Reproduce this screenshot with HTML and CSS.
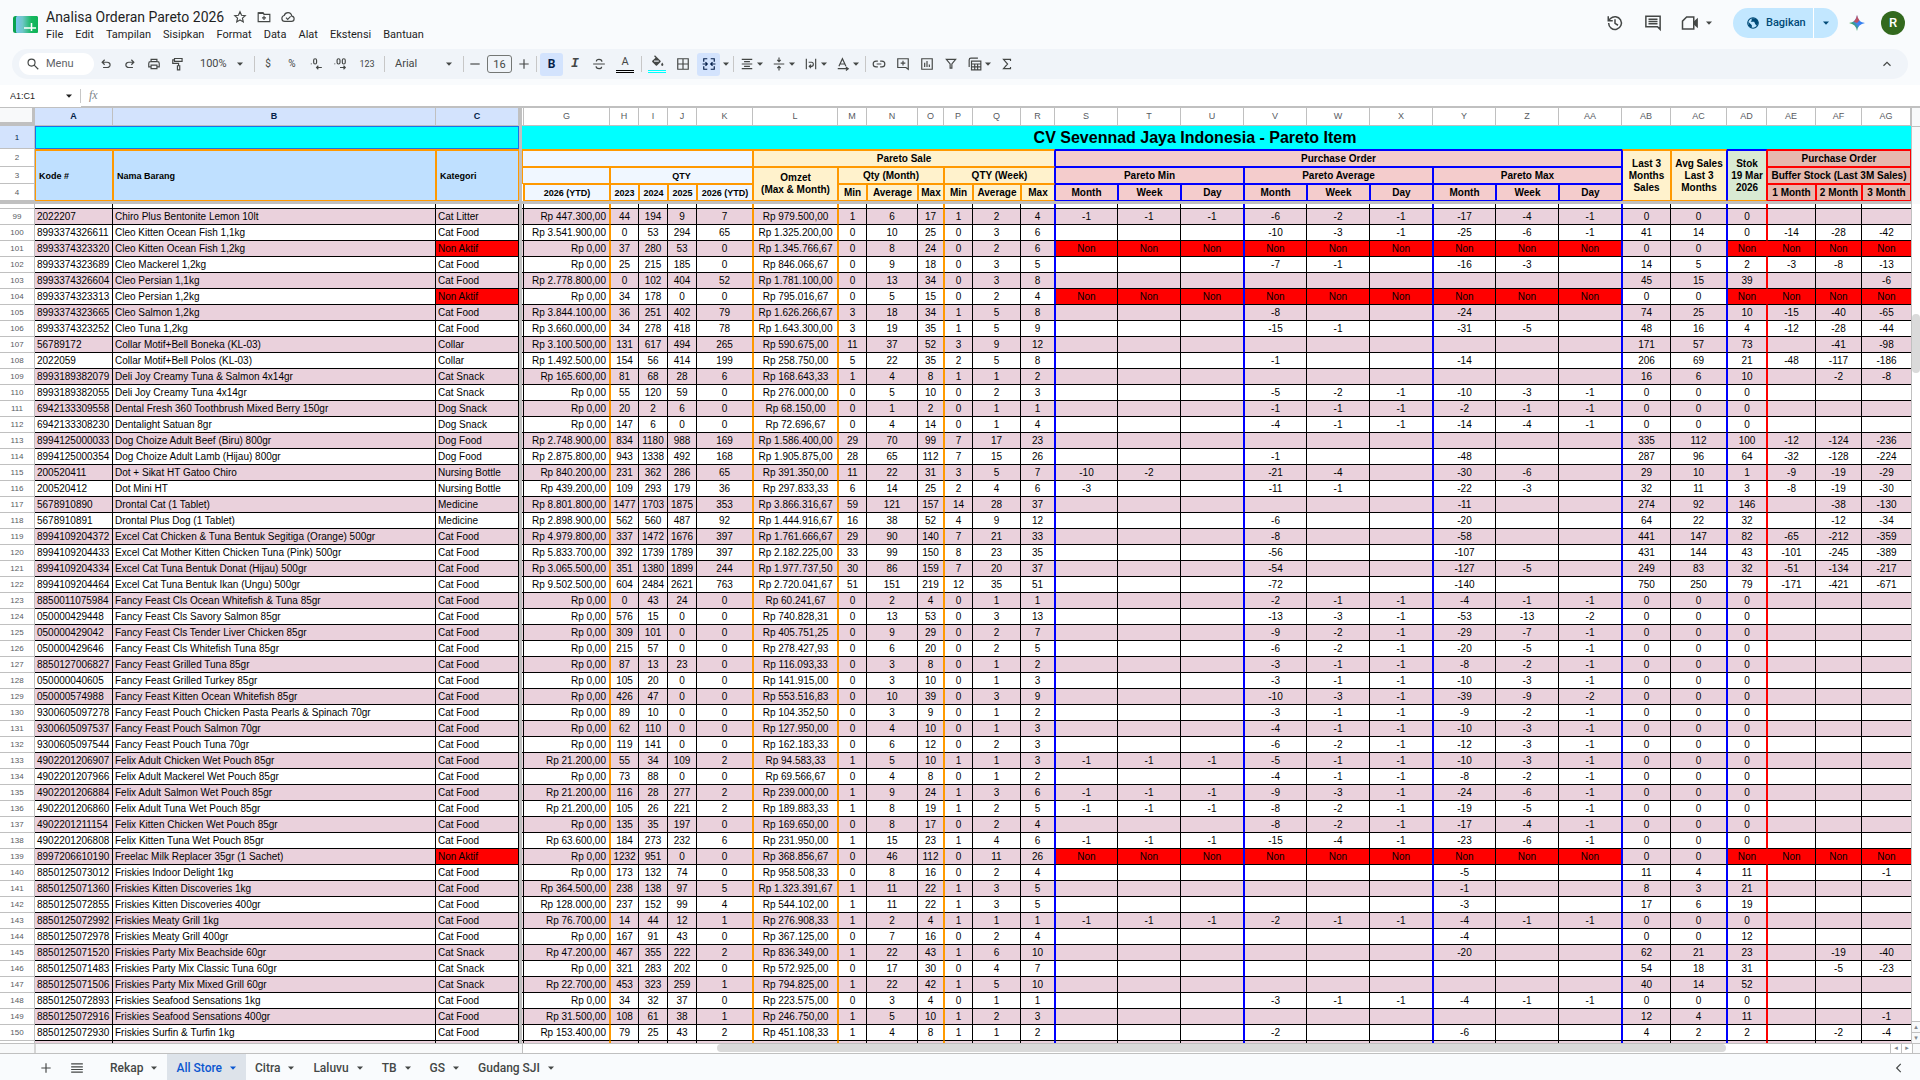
FILE: index.html
```html
<!DOCTYPE html>
<html lang="id">
<head>
<meta charset="utf-8">
<title>Analisa Orderan Pareto 2026</title>
<link rel="stylesheet" href="styles.css">
</head>
<body>
<svg class="sprite" aria-hidden="true">
  <symbol id="caret" viewBox="0 0 8 8"><path d="M1 2.500h6L4 5.800z" fill="currentColor"/></symbol>
  <symbol id="search" viewBox="0 0 24 24"><circle cx="9.5" cy="9.5" r="6"/><path d="M14 14l7 7"/></symbol>
  <symbol id="undo" viewBox="0 -960 960 960"><path class="solid" d="M280-200v-80h284q63 0 109.500-40T720-420q0-60-46.500-100T564-560H312l104 104-56 56-200-200 200-200 56 56-104 104h252q97 0 169.500 63T800-420q0 94-72.500 157T564-200H280Z"/></symbol>
  <symbol id="redo" viewBox="0 -960 960 960"><path class="solid" d="M396-200q-97 0-169.500-63T154-420q0-94 72.500-157T396-640h252L544-744l56-56 200 200-200 200-56-56 104-104H396q-63 0-109.500 40T240-420q0 60 46.500 100T396-280h284v80H396Z"/></symbol>
  <symbol id="print" viewBox="0 0 24 24"><path d="M7 8V4h10v4M7 17H3v-6q0-3 3-3h12q3 0 3 3v6h-4M7 14h10v6H7z"/></symbol>
  <symbol id="paint" viewBox="0 0 24 24"><path d="M6 2.500h13v5H6zM6 5H3v6h10v4M11 15h4v7h-4z"/></symbol>
  <symbol id="decless" viewBox="0 0 24 24"><path d="M22 18h-9m3-3l-3 3 3 3"/><path d="M4 11v1.500"/><rect x="8" y="3" width="5" height="9" rx="2.500"/></symbol>
  <symbol id="decmore" viewBox="0 0 24 24"><path d="M12 18h9m-3-3l3 3-3 3"/><path d="M3 11v1.500"/><rect x="7" y="3" width="5" height="9" rx="2.500"/><rect x="16" y="3" width="5" height="9" rx="2.500"/></symbol>
  <symbol id="minus" viewBox="0 0 24 24"><path d="M4 12h16"/></symbol>
  <symbol id="plus" viewBox="0 0 24 24"><path d="M4 12h16M12 4v16"/></symbol>
  <symbol id="strike" viewBox="0 0 24 24"><path d="M2 12h20M17 8q0-4-5-4-4.500 0-4.500 3.500M7 16q0 4 5 4 4.500 0 4.500-3.500"/></symbol>
  <symbol id="fill" viewBox="0 0 24 24"><path class="solid" d="M7 2l1.500-1.500L18 10q1 1 0 2l-6 6q-1 1-2 0l-6-6q-1-1 0-2l5.500-5.500zM21 13q3 3.500 1.500 5t-3 0 1.500-5z"/><path d="M7 10.500h8" stroke="#f0f4f9"/></symbol>
  <symbol id="borders" viewBox="0 0 24 24"><path d="M3 3h18v18H3zM12 3v18M3 12h18"/></symbol>
  <symbol id="merge" viewBox="0 0 24 24"><path d="M9 3H3v5M15 3h6v5M9 21H3v-5M15 21h6v-5M1 12h8m-3-3l3 3-3 3M23 12h-8m3-3l-3 3 3 3"/></symbol>
  <symbol id="halign" viewBox="0 0 24 24"><path d="M3 4h18M7 8h10M3 12h18M7 16h10M3 20h18"/></symbol>
  <symbol id="valign" viewBox="0 0 24 24"><path d="M3 12h18M12 1v7m-3-3l3 3 3-3M12 23v-7m-3 3l3-3 3 3"/></symbol>
  <symbol id="wrap" viewBox="0 0 24 24"><path d="M4 3v18M20 3v18M8 9h5q3 0 3 3.500T13 16h-4m3-3l-3 3 3 3"/></symbol>
  <symbol id="rotate" viewBox="0 0 24 24"><path d="M5 16L11 3l6 13M7 12h8M3 20h17m-3-3l4 3-4 3"/></symbol>
  <symbol id="link" viewBox="0 0 24 24"><path d="M10 7H7a5 5 0 0 0 0 10h3M14 7h3a5 5 0 0 1 0 10h-3M8 12h8"/></symbol>
  <symbol id="addnote" viewBox="0 0 24 24"><path d="M3 3h18v18l-4-3H3zM12 6.500v8M8 10.500h8"/></symbol>
  <symbol id="chart" viewBox="0 0 24 24"><path d="M3 3h18v18H3zM8 10v7M12 7v10M16 13v4"/></symbol>
  <symbol id="filter" viewBox="0 0 24 24"><path d="M4 4h16l-6.500 8v7h-3v-7z"/></symbol>
  <symbol id="views" viewBox="0 0 24 24"><path d="M2 17V5q0-3 3-3h12M6 7h16v15H6zM6 12h16M6 17h16M11.500 12v10M16.500 12v10"/></symbol>
  <symbol id="sigma" viewBox="0 0 24 24"><path d="M18 7V4H6l7 8-7 8h12v-3"/></symbol>
  <symbol id="up" viewBox="0 0 24 24"><path d="M6 15l6-6 6 6"/></symbol>
  <symbol id="left" viewBox="0 0 24 24"><path d="M15 5l-7 7 7 7"/></symbol>
  <symbol id="star" viewBox="0 0 24 24"><path d="M12 3l2.700 6 6.300.6-4.800 4.300 1.400 6.500L12 17l-5.600 3.400 1.400-6.500L3 9.600 9.300 9z"/></symbol>
  <symbol id="move" viewBox="0 0 24 24"><path d="M2 5h8l2 2.500h10V20H2zM12 10v7M8.500 13.500h7"/><path d="M2 4h9l2 3H2z" fill="currentColor" stroke="none"/></symbol>
  <symbol id="cloud" viewBox="0 0 24 24"><path d="M6.500 19.500q-5 0-5-5 0-4 4-5Q7 4.500 12 4.500q5.500 0 6.500 6 4 .5 4 4.500 0 4.500-4.500 4.500zM8.500 13l3 3 5-5"/></symbol>
  <symbol id="history" viewBox="0 0 24 24"><path d="M3.500 12a8.500 8.500 0 1 0 2.500-6L3 9M3 3v6h6M12 7v5.500l4 2.500"/></symbol>
  <symbol id="chat" viewBox="0 0 24 24"><path d="M2.500 3h19v17.500L18 17H2.500zM6 7h12M6 10h12M6 13h12"/></symbol>
  <symbol id="cam" viewBox="0 0 24 24"><path d="M7.500 4H17v16H2V9.500z"/><path class="solid" d="M17 10l5.500-5v14L17 14z"/></symbol>
  <symbol id="globe" viewBox="0 0 24 24"><circle cx="12" cy="12" r="9"/><path class="solid" d="M4 10l6 6v4L5 17zM9 4l1 3-2 3h6l2 4 3 3 2-6-2-5-4-2z"/></symbol>
  <symbol id="bars" viewBox="0 0 24 24"><path d="M2 5h20M2 10h20M2 14.500h20M2 19h20"/></symbol>
</svg>

<header class="top">
  <svg class="logo" viewBox="0 0 26 18" aria-hidden="true">
    <defs><linearGradient id="lg"><stop offset="0" stop-color="#7cc4ef"/><stop offset=".3" stop-color="#6fc6c8"/><stop offset=".7" stop-color="#17b860"/><stop offset="1" stop-color="#0fb257"/></linearGradient></defs>
    <rect width="25" height="17" rx="2.500" fill="#0aa34e"/><rect x="3" width="22" height="17" rx="1.500" fill="url(#lg)"/>
    <path d="M11 12h12M18.500 7v8" stroke="#fff" stroke-width="1.500" fill="none"/>
  </svg>
  <div class="doc">
    <div class="doc-line">
      <h1 class="doc-title">Analisa Orderan Pareto 2026</h1>
      <button class="mini" aria-label="Bintangi"><svg class="ic"><use href="#star"/></svg></button>
      <button class="mini" aria-label="Pindahkan"><svg class="ic"><use href="#move"/></svg></button>
      <button class="mini" aria-label="Status dokumen"><svg class="ic"><use href="#cloud"/></svg></button>
    </div>
    <nav class="menu">
      <button>File</button><button>Edit</button><button>Tampilan</button><button>Sisipkan</button><button>Format</button><button>Data</button><button>Alat</button><button>Ekstensi</button><button>Bantuan</button>
    </nav>
  </div>
  <div class="actions">
    <button class="act" aria-label="Histori versi"><svg class="ic big"><use href="#history"/></svg></button>
    <button class="act" aria-label="Komentar"><svg class="ic big"><use href="#chat"/></svg></button>
    <button class="act call" aria-label="Meet"><svg class="ic big"><use href="#cam"/></svg><svg class="caret"><use href="#caret"/></svg></button>
    <div class="share">
      <button class="share-main"><svg class="ic"><use href="#globe"/></svg>Bagikan</button>
      <button class="share-more" aria-label="Opsi berbagi"><svg class="caret"><use href="#caret"/></svg></button>
    </div>
    <button class="act" aria-label="Gemini"><svg class="gem" viewBox="0 0 16 16"><defs><linearGradient id="gg" y1="1" x2="1" y2=".2"><stop offset="0" stop-color="#fbbc04"/><stop offset=".3" stop-color="#34a853"/><stop offset=".55" stop-color="#4285f4"/><stop offset="1" stop-color="#1a73e8"/></linearGradient></defs><path d="M8 0q1 7 8 8-7 1-8 8-1-7-8-8 7-1 8-8z" fill="url(#gg)"/><path d="M8 0q1 4 2.500 5.500L8 8 4.500 6.500Q7 5 8 0z" fill="#ea4335" opacity=".75"/></svg></button>
    <button class="avatar" aria-label="Akun">R</button>
  </div>
</header>

<div class="toolbar" role="toolbar">
  <label class="search"><svg class="ic"><use href="#search"/></svg><input type="text" placeholder="Menu" aria-label="Menu"></label>
  <button class="tb" aria-label="Urungkan"><svg class="ic"><use href="#undo"/></svg></button>
  <button class="tb" aria-label="Ulangi"><svg class="ic"><use href="#redo"/></svg></button>
  <button class="tb" aria-label="Cetak"><svg class="ic"><use href="#print"/></svg></button>
  <button class="tb" aria-label="Format cat"><svg class="ic"><use href="#paint"/></svg></button>
  <label class="dd zoom"><select aria-label="Zoom"><option>100%</option></select><svg class="caret"><use href="#caret"/></svg></label>
  <span class="sep"></span>
  <button class="tb sign" aria-label="Mata uang">$</button>
  <button class="tb sign" aria-label="Persen">%</button>
  <button class="tb" aria-label="Kurangi desimal"><svg class="ic"><use href="#decless"/></svg></button>
  <button class="tb" aria-label="Tambah desimal"><svg class="ic"><use href="#decmore"/></svg></button>
  <button class="tb num">123</button>
  <span class="sep"></span>
  <label class="dd font"><select aria-label="Font"><option>Arial</option></select><svg class="caret"><use href="#caret"/></svg></label>
  <span class="sep"></span>
  <button class="tb step" aria-label="Perkecil"><svg class="ic"><use href="#minus"/></svg></button>
  <input class="size" type="text" value="16" aria-label="Ukuran font">
  <button class="tb step" aria-label="Perbesar"><svg class="ic"><use href="#plus"/></svg></button>
  <span class="sep"></span>
  <button class="tb on bold">B</button>
  <button class="tb ital">I</button>
  <button class="tb" aria-label="Coret"><svg class="ic"><use href="#strike"/></svg></button>
  <button class="tb color"><span class="swatch black">A</span></button>
  <span class="sep"></span>
  <button class="tb color" aria-label="Warna isi"><span class="swatch cyan"><svg class="ic"><use href="#fill"/></svg></span></button>
  <button class="tb" aria-label="Batas"><svg class="ic"><use href="#borders"/></svg></button>
  <button class="tb on" aria-label="Gabungkan sel"><svg class="ic"><use href="#merge"/></svg></button>
  <button class="more" aria-label="Jenis penggabungan"><svg class="caret"><use href="#caret"/></svg></button>
  <span class="sep"></span>
  <button class="combo" aria-label="Perataan horizontal"><svg class="ic"><use href="#halign"/></svg><svg class="caret"><use href="#caret"/></svg></button>
  <button class="combo" aria-label="Perataan vertikal"><svg class="ic"><use href="#valign"/></svg><svg class="caret"><use href="#caret"/></svg></button>
  <button class="combo" aria-label="Pengemasan teks"><svg class="ic"><use href="#wrap"/></svg><svg class="caret"><use href="#caret"/></svg></button>
  <button class="combo" aria-label="Rotasi teks"><svg class="ic"><use href="#rotate"/></svg><svg class="caret"><use href="#caret"/></svg></button>
  <span class="sep"></span>
  <button class="tb" aria-label="Tautan"><svg class="ic"><use href="#link"/></svg></button>
  <button class="tb" aria-label="Sisipkan komentar"><svg class="ic"><use href="#addnote"/></svg></button>
  <button class="tb" aria-label="Diagram"><svg class="ic"><use href="#chart"/></svg></button>
  <button class="tb" aria-label="Filter"><svg class="ic"><use href="#filter"/></svg></button>
  <button class="combo" aria-label="Tampilan filter"><svg class="ic"><use href="#views"/></svg><svg class="caret"><use href="#caret"/></svg></button>
  <button class="tb" aria-label="Fungsi"><svg class="ic"><use href="#sigma"/></svg></button>
  <button class="tb collapse" aria-label="Sembunyikan menu"><svg class="ic"><use href="#up"/></svg></button>
</div>

<div class="formula">
  <label class="namebox"><input type="text" value="A1:C1" aria-label="Kotak nama"><svg class="caret"><use href="#caret"/></svg></label>
  <span class="fx">fx</span>
  <input class="fxinput" type="text" aria-label="Formula">
</div>

<main class="grid">
  <div class="pane">
    <table class="sheet">
      <colgroup>
        <col class="w35"><col class="w78"><col class="w323"><col class="w83"><col class="w3"><col class="w2">
        <col class="w86"><col class="w29"><col class="w29"><col class="w29"><col class="w56"><col class="w85">
        <col class="w29"><col class="w51"><col class="w26"><col class="w29"><col class="w48"><col class="w34">
        <col class="w63"><col class="w63"><col class="w63"><col class="w63"><col class="w63"><col class="w63"><col class="w63"><col class="w63"><col class="w63">
        <col class="w49"><col class="w56"><col class="w40"><col class="w49"><col class="w46"><col>
      </colgroup>
      <thead>
        <tr class="letters">
          <th class="corner"></th><th class="sel">A</th><th class="sel">B</th><th class="sel">C</th><th class="bar"></th><th></th>
          <th>G</th><th>H</th><th>I</th><th>J</th><th>K</th><th>L</th><th>M</th><th>N</th><th>O</th><th>P</th><th>Q</th><th>R</th><th>S</th><th>T</th><th>U</th><th>V</th><th>W</th><th>X</th><th>Y</th><th>Z</th><th>AA</th><th>AB</th><th>AC</th><th>AD</th><th>AE</th><th>AF</th><th>AG</th>
        </tr>
        <tr class="r1">
          <th class="rn sel">1</th><td class="picked" colspan="3"></td><td class="bar"></td>
          <td class="banner" colspan="28">CV Sevennad Jaya Indonesia - Pareto Item</td>
        </tr>
        <tr class="r2">
          <th class="rn">2</th>
          <th class="h o left sky" rowspan="3">Kode #</th><th class="h o left sky" rowspan="3">Nama Barang</th><th class="h o left sky" rowspan="3">Kategori</th><td class="bar" rowspan="3"></td>
          <th class="h o ice" colspan="6"></th>
          <th class="h o cream b-right" colspan="7">Pareto Sale</th>
          <th class="h b rose" colspan="9">Purchase Order</th>
          <th class="h o cream b-left" rowspan="3">Last 3<br>Months<br>Sales</th><th class="h o cream b-right" rowspan="3">Avg Sales<br>Last 3<br>Months</th>
          <th class="h b mint" rowspan="3">Stok<br>19 Mar<br>2026</th>
          <th class="h r brick" colspan="3">Purchase Order</th>
        </tr>
        <tr class="r3">
          <th class="rn">3</th>
          <th class="h o ice" colspan="2"></th><th class="h o ice small" colspan="4">QTY</th>
          <th class="h o cream" rowspan="2">Omzet<br>(Max &amp; Month)</th>
          <th class="h o cream" colspan="3">Qty (Month)</th><th class="h o cream b-right" colspan="3">QTY (Week)</th>
          <th class="h b rose" colspan="3">Pareto Min</th><th class="h b rose" colspan="3">Pareto Average</th><th class="h b rose" colspan="3">Pareto Max</th>
          <th class="h r brick" colspan="3">Buffer Stock (Last 3M Sales)</th>
        </tr>
        <tr class="r4">
          <th class="rn">4</th>
          <th class="edge"></th><th class="h o ice small">2026 (YTD)</th><th class="h o ice small">2023</th><th class="h o ice small">2024</th><th class="h o ice small">2025</th><th class="h o ice small">2026 (YTD)</th>
          <th class="h o cream">Min</th><th class="h o cream">Average</th><th class="h o cream">Max</th><th class="h o cream">Min</th><th class="h o cream">Average</th><th class="h o cream b-right">Max</th>
          <th class="h b rose">Month</th><th class="h b rose">Week</th><th class="h b rose">Day</th><th class="h b rose">Month</th><th class="h b rose">Week</th><th class="h b rose">Day</th><th class="h b rose">Month</th><th class="h b rose">Week</th><th class="h b rose">Day</th>
          <th class="h r brick">1 Month</th><th class="h r brick">2 Month</th><th class="h r brick">3 Month</th>
        </tr>
        <tr class="freeze"><td class="bar" colspan="33"></td></tr>
      </thead>
      <tbody id="rows"></tbody>
    </table>
  </div>
  <div class="vscroll">
    <div class="vhead"></div><div class="vfrozen"></div>
    <div class="vtrack"><div class="vthumb"></div></div>
    <button class="nub" aria-label="Gulir ke atas">▴</button><button class="nub" aria-label="Gulir ke bawah">▾</button>
  </div>
</main>
<div class="hscroll">
  <div class="hleft"></div>
  <div class="htrack"><div class="hthumb"></div></div>
  <button class="nub" aria-label="Gulir ke kiri">◂</button><button class="nub" aria-label="Gulir ke kanan">▸</button>
  <div class="hcorner"></div>
</div>

<footer class="tabs">
  <button class="tabtool" aria-label="Tambahkan sheet"><svg class="ic"><use href="#plus"/></svg></button>
  <button class="tabtool" aria-label="Semua sheet"><svg class="ic"><use href="#bars"/></svg></button>
  <nav class="tablist">
    <button class="tab">Rekap<svg class="caret"><use href="#caret"/></svg></button>
    <button class="tab active">All Store<svg class="caret"><use href="#caret"/></svg></button>
    <button class="tab">Citra<svg class="caret"><use href="#caret"/></svg></button>
    <button class="tab">Laluvu<svg class="caret"><use href="#caret"/></svg></button>
    <button class="tab">TB<svg class="caret"><use href="#caret"/></svg></button>
    <button class="tab">GS<svg class="caret"><use href="#caret"/></svg></button>
    <button class="tab">Gudang SJI<svg class="caret"><use href="#caret"/></svg></button>
  </nav>
  <button class="tabtool end" aria-label="Panel samping"><svg class="ic"><use href="#left"/></svg></button>
</footer>
<script src="rows.js"></script>
</body>
</html>
```

FILE: rows.js
```js
// number | code | name | category | revenue | qty per year | omzet | month+week qty | min | average | max | sales+stock | buffer
const DATA = `
99|2022207|Chiro Plus Bentonite Lemon 10lt|Cat Litter|447.300|44 194 9 7|979.500,00|1 6 17 1 2 4|-1 -1 -1|-6 -2 -1|-17 -4 -1|0 0 0|
100|8993374326611|Cleo Kitten Ocean Fish 1,1kg|Cat Food|3.541.900|0 53 294 65|1.325.200,00|0 10 25 0 3 6||-10 -3 -1|-25 -6 -1|41 14 0|-14 -28 -42
101|8993374323320|Cleo Kitten Ocean Fish 1,2kg|Non Aktif|0|37 280 53 0|1.345.766,67|0 8 24 0 2 6|Non Non Non|Non Non Non|Non Non Non|0 0 Non|Non Non Non
102|8993374323689|Cleo Mackerel 1,2kg|Cat Food|0|25 215 185 0|846.066,67|0 9 18 0 3 5||-7 -1|-16 -3|14 5 2|-3 -8 -13
103|8993374326604|Cleo Persian 1,1kg|Cat Food|2.778.800|0 102 404 52|1.781.100,00|0 13 34 0 3 8||||45 15 39|. . -6
104|8993374323313|Cleo Persian 1,2kg|Non Aktif|0|34 178 0 0|795.016,67|0 5 15 0 2 4|Non Non Non|Non Non Non|Non Non Non|0 0 Non|Non Non Non
105|8993374323665|Cleo Salmon 1,2kg|Cat Food|3.844.100|36 251 402 79|1.626.266,67|3 18 34 1 5 8||-8|-24|74 25 10|-15 -40 -65
106|8993374323252|Cleo Tuna 1,2kg|Cat Food|3.660.000|34 278 418 78|1.643.300,00|3 19 35 1 5 9||-15 -1|-31 -5|48 16 4|-12 -28 -44
107|56789172|Collar Motif+Bell Boneka (KL-03)|Collar|3.100.500|131 617 494 265|590.675,00|11 37 52 3 9 12||||171 57 73|. -41 -98
108|2022059|Collar Motif+Bell Polos (KL-03)|Collar|1.492.500|154 56 414 199|258.750,00|5 22 35 2 5 8||-1|-14|206 69 21|-48 -117 -186
109|8993189382079|Deli Joy Creamy Tuna & Salmon 4x14gr|Cat Snack|165.600|81 68 28 6|168.643,33|1 4 8 1 1 2||||16 6 10|. -2 -8
110|8993189382055|Deli Joy Creamy Tuna 4x14gr|Cat Snack|0|55 120 59 0|276.000,00|0 5 10 0 2 3||-5 -2 -1|-10 -3 -1|0 0 0|
111|6942133309558|Dental Fresh 360 Toothbrush Mixed Berry 150gr|Dog Snack|0|20 2 6 0|68.150,00|0 1 2 0 1 1||-1 -1 -1|-2 -1 -1|0 0 0|
112|6942133308230|Dentalight Satuan 8gr|Dog Snack|0|147 6 0 0|72.696,67|0 4 14 0 1 4||-4 -1 -1|-14 -4 -1|0 0 0|
113|8994125000033|Dog Choize Adult Beef (Biru) 800gr|Dog Food|2.748.900|834 1180 988 169|1.586.400,00|29 70 99 7 17 23||||335 112 100|-12 -124 -236
114|8994125000354|Dog Choize Adult Lamb (Hijau) 800gr|Dog Food|2.875.800|943 1338 492 168|1.905.875,00|28 65 112 7 15 26||-1|-48|287 96 64|-32 -128 -224
115|200520411|Dot + Sikat HT Gatoo Chiro|Nursing Bottle|840.200|231 362 286 65|391.350,00|11 22 31 3 5 7|-10 -2|-21 -4|-30 -6|29 10 1|-9 -19 -29
116|200520412|Dot Mini HT|Nursing Bottle|439.200|109 293 179 36|297.833,33|6 14 25 2 4 6|-3|-11 -1|-22 -3|32 11 3|-8 -19 -30
117|5678910890|Drontal Cat (1 Tablet)|Medicine|8.801.800|1477 1703 1875 353|3.866.316,67|59 121 157 14 28 37|||-11|274 92 146|. -38 -130
118|5678910891|Drontal Plus Dog (1 Tablet)|Medicine|2.898.900|562 560 487 92|1.444.916,67|16 38 52 4 9 12||-6|-20|64 22 32|. -12 -34
119|8994109204372|Excel Cat Chicken & Tuna Bentuk Segitiga (Orange) 500gr|Cat Food|4.979.800|337 1472 1676 397|1.761.666,67|29 90 140 7 21 33||-8|-58|441 147 82|-65 -212 -359
120|8994109204433|Excel Cat Mother Kitten Chicken Tuna (Pink) 500gr|Cat Food|5.833.700|392 1739 1789 397|2.182.225,00|33 99 150 8 23 35||-56|-107|431 144 43|-101 -245 -389
121|8994109204334|Excel Cat Tuna Bentuk Donat (Hijau) 500gr|Cat Food|3.065.500|351 1380 1899 244|1.977.737,50|30 86 159 7 20 37||-54|-127 -5|249 83 32|-51 -134 -217
122|8994109204464|Excel Cat Tuna Bentuk Ikan (Ungu) 500gr|Cat Food|9.502.500|604 2484 2621 763|2.720.041,67|51 151 219 12 35 51||-72|-140|750 250 79|-171 -421 -671
123|8850011075984|Fancy Feast Cls Ocean Whitefish & Tuna 85gr|Cat Food|0|0 43 24 0|60.241,67|0 2 4 0 1 1||-2 -1 -1|-4 -1 -1|0 0 0|
124|050000429448|Fancy Feast Cls Savory Salmon 85gr|Cat Food|0|576 15 0 0|740.828,31|0 13 53 0 3 13||-13 -3 -1|-53 -13 -2|0 0 0|
125|050000429042|Fancy Feast Cls Tender Liver Chicken 85gr|Cat Food|0|309 101 0 0|405.751,25|0 9 29 0 2 7||-9 -2 -1|-29 -7 -1|0 0 0|
126|050000429646|Fancy Feast Cls Whitefish Tuna 85gr|Cat Food|0|215 57 0 0|278.427,93|0 6 20 0 2 5||-6 -2 -1|-20 -5 -1|0 0 0|
127|8850127006827|Fancy Feast Grilled Tuna 85gr|Cat Food|0|87 13 23 0|116.093,33|0 3 8 0 1 2||-3 -1 -1|-8 -2 -1|0 0 0|
128|050000040605|Fancy Feast Grilled Turkey 85gr|Cat Food|0|105 20 0 0|141.915,00|0 3 10 0 1 3||-3 -1 -1|-10 -3 -1|0 0 0|
129|050000574988|Fancy Feast Kitten Ocean Whitefish 85gr|Cat Food|0|426 47 0 0|553.516,83|0 10 39 0 3 9||-10 -3 -1|-39 -9 -2|0 0 0|
130|9300605097278|Fancy Feast Pouch Chicken Pasta Pearls & Spinach 70gr|Cat Food|0|89 10 0 0|104.352,50|0 3 9 0 1 2||-3 -1 -1|-9 -2 -1|0 0 0|
131|9300605097537|Fancy Feast Pouch Salmon 70gr|Cat Food|0|62 110 0 0|127.950,00|0 4 10 0 1 3||-4 -1 -1|-10 -3 -1|0 0 0|
132|9300605097544|Fancy Feast Pouch Tuna 70gr|Cat Food|0|119 141 0 0|162.183,33|0 6 12 0 2 3||-6 -2 -1|-12 -3 -1|0 0 0|
133|4902201206907|Felix Adult Chicken Wet Pouch 85gr|Cat Food|21.200|55 34 109 2|94.583,33|1 5 10 1 1 3|-1 -1 -1|-5 -1 -1|-10 -3 -1|0 0 0|
134|4902201207966|Felix Adult Mackerel Wet Pouch 85gr|Cat Food|0|73 88 0 0|69.566,67|0 4 8 0 1 2||-4 -1 -1|-8 -2 -1|0 0 0|
135|4902201206884|Felix Adult Salmon Wet Pouch 85gr|Cat Food|21.200|116 28 277 2|239.000,00|1 9 24 1 3 6|-1 -1 -1|-9 -3 -1|-24 -6 -1|0 0 0|
136|4902201206860|Felix Adult Tuna Wet Pouch 85gr|Cat Food|21.200|105 26 221 2|189.883,33|1 8 19 1 2 5|-1 -1 -1|-8 -2 -1|-19 -5 -1|0 0 0|
137|4902201211154|Felix Kitten Chicken Wet Pouch 85gr|Cat Food|0|135 35 197 0|169.650,00|0 8 17 0 2 4||-8 -2 -1|-17 -4 -1|0 0 0|
138|4902201206808|Felix Kitten Tuna Wet Pouch 85gr|Cat Food|63.600|184 273 232 6|231.950,00|1 15 23 1 4 6|-1 -1 -1|-15 -4 -1|-23 -6 -1|0 0 0|
139|8997206610190|Freelac Milk Replacer 35gr (1 Sachet)|Non Aktif|0|1232 951 0 0|368.856,67|0 46 112 0 11 26|Non Non Non|Non Non Non|Non Non Non|0 0 Non|Non Non Non
140|8850125073012|Friskies Indoor Delight 1kg|Cat Food|0|173 132 74 0|958.508,33|0 8 16 0 2 4|||-5|11 4 11|. . -1
141|8850125071360|Friskies Kitten Discoveries 1kg|Cat Food|364.500|238 138 97 5|1.323.391,67|1 11 22 1 3 5|||-1|8 3 21|
142|8850125072855|Friskies Kitten Discoveries 400gr|Cat Food|128.000|237 152 99 4|544.102,00|1 11 22 1 3 5|||-3|17 6 19|
143|8850125072992|Friskies Meaty Grill 1kg|Cat Food|76.700|14 44 12 1|276.908,33|1 2 4 1 1 1|-1 -1 -1|-2 -1 -1|-4 -1 -1|0 0 0|
144|8850125072978|Friskies Meaty Grill 400gr|Cat Food|0|167 91 43 0|367.125,00|0 7 16 0 2 4|||-4|0 0 12|
145|8850125071520|Friskies Party Mix Beachside 60gr|Cat Snack|47.200|467 355 222 2|836.349,00|1 22 43 1 6 10|||-20|62 21 23|. -19 -40
146|8850125071483|Friskies Party Mix Classic Tuna 60gr|Cat Snack|0|321 283 202 0|572.925,00|0 17 30 0 4 7||||54 18 31|. -5 -23
147|8850125071506|Friskies Party Mix Mixed Grill 60gr|Cat Snack|22.700|453 323 259 1|794.825,00|1 22 42 1 5 10||||40 14 52|
148|8850125072893|Friskies Seafood Sensations 1kg|Cat Food|0|34 32 37 0|223.575,00|0 3 4 0 1 1||-3 -1 -1|-4 -1 -1|0 0 0|
149|8850125072916|Friskies Seafood Sensations 400gr|Cat Food|31.500|108 61 38 1|246.750,00|1 5 10 1 2 3||||12 4 11|. . -1
150|8850125072930|Friskies Surfin & Turfin 1kg|Cat Food|153.400|79 25 43 2|451.108,33|1 4 8 1 1 2||-2|-6|4 2 2|. -2 -4`;

// Number of columns in each numeric block, in sheet order from G to AG.
const BLOCKS = [1, 4, 1, 6, 3, 3, 3, 3, 3];

// Thick group dividers: index of the column (G = 0) and colour of the line on its right.
const DIVIDERS = { 0: 'o', 4: 'o', 5: 'o', 8: 'o', 11: 'b', 14: 'b', 17: 'b', 20: 'b', 22: 'b', 23: 'r' };

const body = document.getElementById('rows');

function addCell(row, text, classes, tag = 'td') {
  const cell = document.createElement(tag);
  cell.textContent = text;
  if (classes.length) cell.className = classes.join(' ');
  row.append(cell);
}

function addRow(number, labels, values, extra) {
  const row = document.createElement('tr');
  row.className = extra;
  addCell(row, number, ['rn'], 'th');
  labels.forEach((label) => addCell(row, label, label === 'Non Aktif' ? ['txt', 'off'] : ['txt']));
  addCell(row, '', ['bar']);
  addCell(row, '', []);
  values.forEach((value, i) => {
    const classes = [];
    if (i === 0) classes.push('money');
    if (DIVIDERS[i]) classes.push('end-' + DIVIDERS[i]);
    if (DIVIDERS[i - 1]) classes.push('start-' + DIVIDERS[i - 1]);
    if (value === 'Non') classes.push('off');
    addCell(row, value, classes);
  });
  body.append(row);
}

const blank = Array(27).fill('');

addRow('', ['', '', ''], blank, 'sliver');
DATA.trim().split('\n').forEach((line, n) => {
  const [number, code, name, category, ...groups] = line.split('|');
  const values = BLOCKS.flatMap((size, i) => {
    if (i === 0) return ['Rp ' + groups[i] + ',00'];
    if (i === 2) return ['Rp ' + groups[i]];
    const parts = groups[i] ? groups[i].split(' ') : [];
    return Array.from({ length: size }, (_, k) => (parts[k] && parts[k] !== '.' ? parts[k] : ''));
  });
  addRow(number, [code, name, category], values, n % 2 ? 'row' : 'row pink');
});
addRow('', ['', '', ''], blank, 'row pink');
```

FILE: styles.css
```css
* { box-sizing: border-box; }

body {
  margin: 0;
  height: 100vh;
  display: flex;
  flex-direction: column;
  overflow: hidden;
  background: #f9fbfd;
  color: #1f1f1f;
  font: 11px/14px Roboto, "Liberation Sans", sans-serif;
}

button, input, select {
  margin: 0;
  padding: 0;
  border: 0;
  background: none;
  color: inherit;
  font: inherit;
  outline: 0;
}

select { appearance: none; }

.sprite { display: none; }

svg { flex: none; }

.ic {
  width: 14px;
  height: 14px;
  fill: none;
  stroke: currentColor;
  stroke-width: 2;
}
.ic.big { width: 18px; height: 18px; }
.solid { fill: currentColor; stroke: none; }
.caret { width: 8px; height: 8px; }

/* Title bar */
.top {
  display: flex;
  align-items: flex-start;
  height: 49px;
  padding: 0 15px 0 13px;
}
.logo { width: 26px; height: 18px; margin-top: 16px; }
.doc { margin-left: 7px; padding-top: 8px; }
.doc-line { display: flex; align-items: center; height: 18px; }
.doc-title {
  margin: 0 4px 0 0;
  font-size: 14px;
  line-height: 18px;
  font-weight: 400;
}
.mini {
  display: flex;
  justify-content: center;
  width: 24px;
  color: #444746;
}
.menu { display: flex; gap: 12px; padding-top: 1px; }
.menu button { line-height: 16px; }

.actions {
  display: flex;
  align-items: center;
  margin-left: auto;
  height: 30px;
  margin-top: 8px;
}
.act {
  display: flex;
  align-items: center;
  justify-content: center;
  width: 38px;
  color: #444746;
}
.call { width: 50px; gap: 6px; margin-right: 11px; }
.share {
  display: flex;
  height: 30px;
  border-radius: 15px;
  overflow: hidden;
  background: #c2e7ff;
  color: #004a77;
}
.share-main {
  display: flex;
  align-items: center;
  gap: 6px;
  width: 80px;
  padding-left: 13px;
  font-weight: 500;
}
.share-more {
  display: flex;
  align-items: center;
  justify-content: center;
  width: 25px;
  border-left: 1px solid #fff;
}
.gem { width: 16px; height: 16px; }
.avatar {
  width: 24px;
  height: 24px;
  margin-left: 5px;
  border-radius: 50%;
  background: #33691e;
  color: #fff;
  font-size: 13px;
  font-weight: 500;
}

/* Toolbar */
.toolbar {
  display: flex;
  align-items: center;
  height: 30px;
  margin: 0 12px 6px;
  padding: 0 9px 0 7px;
  border-radius: 15px;
  background: #f0f4f9;
  color: #444746;
}
.search {
  display: flex;
  align-items: center;
  gap: 6px;
  width: 75px;
  height: 22px;
  padding-left: 7px;
  border-radius: 11px;
  background: #fff;
}
.search input { width: 40px; }
.search input::placeholder { color: #5f6368; opacity: 1; }
.tb {
  display: flex;
  align-items: center;
  justify-content: center;
  width: 24px;
  height: 23px;
  border-radius: 3px;
}
.tb.sign { font-size: 10px; }
.tb.num { width: 30px; font-size: 9px; }
.tb.step { width: 20px; }
.tb.color { width: 28px; }
.tb.on { width: 23px; margin-left: 2px; background: #d3e3fd; color: #041e49; }
.tb.bold { font-size: 12px; font-weight: 700; }
.tb.ital { font: italic 700 13px/16px "Liberation Mono", monospace; }
.dd { display: flex; align-items: center; justify-content: space-between; height: 23px; }
.dd select { width: 34px; }
.dd.zoom { width: 62px; padding: 0 8px 0 10px; }
.dd.font { width: 75px; padding: 0 8px 0 9px; }
.sep {
  width: 4px;
  height: 16px;
  background: linear-gradient(#c7c7c7, #c7c7c7) center / 1px 100% no-repeat;
}
.size {
  width: 25px;
  height: 18px;
  margin: 0 2px;
  border: 1px solid #747775;
  border-radius: 3px;
  text-align: center;
}
.swatch {
  display: flex;
  justify-content: center;
  width: 18px;
  height: 18px;
  border-bottom: 3px double #000;
  line-height: 14px;
}
.swatch.cyan { border-color: #00ffff; }
.combo { display: flex; align-items: center; gap: 2px; width: 32px; padding-left: 5px; height: 23px; }
.more { display: flex; align-items: center; justify-content: center; width: 11px; height: 23px; }
.collapse { margin-left: auto; }

/* Formula bar */
.formula { display: flex; height: 22px; background: #fff; }
.namebox {
  display: flex;
  align-items: center;
  width: 81px;
  padding: 0 8px 0 10px;
  background: linear-gradient(#c7c7c7, #c7c7c7) right center / 1px 14px no-repeat;
  font-family: "Liberation Sans", sans-serif;
  font-size: 9px;
}
.namebox input { flex: 1; width: 40px; }
.fx {
  width: 28px;
  padding-left: 8px;
  border-bottom: 1px solid #c0c0c0;
  color: #80868b;
  font: italic 12px/21px "Liberation Serif", serif;
}
.fxinput { flex: 1; border-bottom: 1px solid #c0c0c0; }

/* Spreadsheet */
.grid {
  flex: 1;
  min-height: 0;
  display: flex;
  border-top: 1px solid #c0c0c0;
  background: #fff;
}
.pane { flex: 1; min-width: 0; overflow: hidden; border-right: 1px solid #c0c0c0; }
.sheet {
  width: 100%;
  table-layout: fixed;
  border-collapse: separate;
  border-spacing: 0;
  font: 10px/15px "Liberation Sans", Arial, sans-serif;
  color: #000;
  white-space: nowrap;
}
.w2 { width: 2px; } .w3 { width: 3px; } .w26 { width: 26px; } .w29 { width: 29px; }
.w34 { width: 34px; } .w35 { width: 35px; } .w40 { width: 40px; } .w46 { width: 46px; }
.w48 { width: 48px; } .w49 { width: 49px; } .w51 { width: 51px; } .w56 { width: 56px; }
.w63 { width: 63px; } .w78 { width: 78px; } .w83 { width: 83px; } .w85 { width: 85px; }
.w86 { width: 86px; } .w323 { width: 323px; }

.sheet th, .sheet td { padding: 0; overflow: hidden; text-align: center; }

.letters th {
  height: 18px;
  border-right: 1px solid #c0c0c0;
  border-bottom: 1px solid #c0c0c0;
  color: #575b5f;
  font-size: 9px;
  font-weight: 400;
}
.sheet .sel { background: #d3e3fd; color: #041e49; font-weight: 700; }
.sheet .corner { border-right-width: 3px; border-bottom-width: 4px; background: #f8f9fa; }
.sheet .bar { border: 0; background: #c0c0c0; }

.sheet .rn {
  border-right: 1px solid #c0c0c0;
  border-bottom: 1px solid #c0c0c0;
  color: #575b5f;
  font-size: 8px;
  font-weight: 400;
}
.sheet .rn.sel { color: #041e49; }

.r1 > * { height: 23px; }
.r2 > * { height: 18px; }
.r3 > *, .r4 > * { height: 17px; }
.picked { background: #00ffff; box-shadow: inset 0 0 0 1px #1a73e8; }
.sheet .banner {
  padding-right: 43px;
  background: #00ffff;
  font-size: 16px;
  font-weight: 700;
}

.h { border: 1px solid; line-height: 12px; font-weight: 700; }
.r2 .h { border-top-width: 2px; }
.h.o { border-color: #ff9900; }
.h.b { border-color: #0000ff; }
.h.r { border-color: #ff0000; }
.h.b-left { border-left-color: #0000ff; }
.h.b-right { border-right-color: #0000ff; }
.sheet .left { padding-left: 3px; text-align: left; font-size: 9px; }
.small { font-size: 9px; }
.sky { background: #bfe0ff; }
.ice { background: #f0f7ff; }
.cream { background: #fff2cc; }
.rose { background: #f4cccc; }
.mint { background: #d9ead3; }
.h.mint { border-right-color: #ff0000; border-bottom-color: #ff9900; }
.brick { background: #e6b8af; }
.edge { border-right: 1px solid #ff9900; }
.freeze td { height: 3px; line-height: 0; }

.row td, .sliver td { border-right: 1px solid #000; border-bottom: 1px solid #000; }
.row > * { height: 16px; }
.sliver > * { height: 5px; line-height: 0; }
.pink td { background: #ead1dc; }
.sheet .txt { padding-left: 2px; text-align: left; }
.sheet .money { padding-right: 3px; text-align: right; }
.sheet .off { background: #ff0000; }
.sheet .end-o { border-right-color: #ff9900; }
.sheet .end-b { border-right-color: #0000ff; }
.sheet .end-r { border-right-color: #ff0000; }
.sheet .start-o { border-left: 1px solid #ff9900; }
.sheet .start-b { border-left: 1px solid #0000ff; }
.sheet .start-r { border-left: 1px solid #ff0000; }
.sheet td:last-child { border-right: 0; }

/* Scrollbars */
.vscroll { display: flex; flex-direction: column; width: 8px; }
.vhead { height: 19px; border-bottom: 1px solid #c0c0c0; background: #f8f9fa; }
.vfrozen { height: 77px; background: #f8f9fa; }
.vtrack { flex: 1; padding-top: 110px; }
.vthumb { height: 59px; border-radius: 4px; background: #dadada; }
.nub {
  width: 11px;
  border-left: 1px solid #c0c0c0;
  color: #80868b;
  font: 7px/9px "DejaVu Sans", sans-serif;
}
.vscroll .nub { width: 8px; height: 11px; border-left: 0; border-top: 1px solid #c0c0c0; background: #f8f9fa; }
.hscroll {
  display: flex;
  height: 11px;
  border-top: 1px solid #c0c0c0;
  border-bottom: 1px solid #c0c0c0;
  background: #fff;
}
.hleft { width: 523px; border-right: 1px solid #c0c0c0; background: linear-gradient(#d5d5d5, #d5d5d5) 34px 0 / 2px 100% no-repeat #f8f9fa; }
.htrack { flex: 1; display: grid; grid-template-columns: 194fr 1008fr 164fr; }
.hthumb { grid-column: 2; height: 8px; border-radius: 4px; background: #dadada; }
.hcorner { width: 8px; border-left: 1px solid #c0c0c0; background: #f8f9fa; }

/* Sheet tabs */
.tabs { display: flex; height: 26px; padding: 0 10px 0 30px; color: #444746; }
.tabtool { display: flex; align-items: center; justify-content: center; width: 31px; padding-top: 2px; }
.tabtool.end { width: 22px; margin-left: auto; }
.tablist { display: flex; padding-left: 9px; }
.tab {
  display: flex;
  align-items: center;
  gap: 7px;
  padding: 2px 9px 0;
  font-size: 12px;
  font-weight: 500;
}
.tab.active { background: #dde3ea; color: #0b57d0; }
```
